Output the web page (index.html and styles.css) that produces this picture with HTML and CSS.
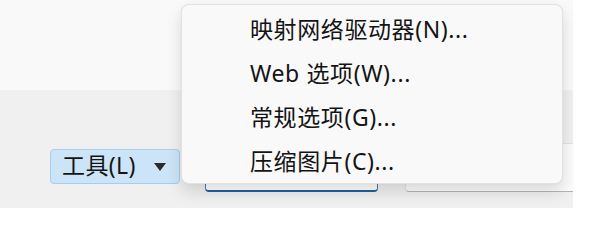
FILE: index.html
```html
<!DOCTYPE html>
<html lang="zh-CN">
<head>
<meta charset="utf-8">
<link rel="stylesheet" href="styles.css">
</head>
<body>
<div class="page">
  <div class="top-panel"></div>
  <div class="toolbar">
    <div class="tools-btn">
      <span class="tools-label">工具(L)</span>
      <span class="caret"></span>
    </div>
    <div class="field focused"></div>
    <div class="field plain"></div>
  </div>
  <div class="menu">
    <div class="menu-item">映射网络驱动器(N)...</div>
    <div class="menu-item">Web 选项(W)...</div>
    <div class="menu-item">常规选项(G)...</div>
    <div class="menu-item">压缩图片(C)...</div>
  </div>
</div>
</body>
</html>
```

FILE: styles.css
```css
html, body {
  margin: 0;
  padding: 0;
  background: #ffffff;
}
body {
  font-family: "Noto Sans", "Noto Sans CJK SC", sans-serif;
  color: #141414;
}
.page {
  position: relative;
  width: 573px;
}
.top-panel {
  height: 90px;
  background: #f9f9f9;
}
.toolbar {
  height: 118px;
  background: #f0f0f0;
  display: flex;
  align-items: flex-start;
  padding-left: 50px;
  gap: 25px;
  overflow: hidden;
  box-sizing: border-box;
}
.tools-btn {
  margin-top: 59px;
  width: 130px;
  height: 35px;
  box-sizing: border-box;
  background: #cce4f7;
  border: 1px solid #a6cdee;
  border-radius: 4px;
  display: flex;
  align-items: center;
  padding-left: 11px;
  flex-shrink: 0;
}
.tools-label {
  font-size: 23px;
  line-height: 1;
  margin-top: -2px;
  letter-spacing: 0.4px;
}
.caret {
  margin-left: 18px;
  width: 0;
  height: 0;
  border-left: 6px solid transparent;
  border-right: 6px solid transparent;
  border-top: 8px solid #2b2b2b;
}
.field {
  margin-top: 53px;
  height: 49px;
  box-sizing: border-box;
  border-radius: 4px;
  flex-shrink: 0;
}
.field.focused {
  width: 173px;
  background: #ffffff;
  border: 1px solid #4a78a8;
  border-bottom: 2px solid #24609e;
}
.field.plain {
  margin-left: 2px;
  width: 200px;
  background: #fbfbfb;
  border: 1px solid #e3e3e3;
  border-bottom-color: #b5b5b5;
}
.menu {
  position: absolute;
  left: 181px;
  top: 4px;
  width: 382px;
  height: 180px;
  box-sizing: border-box;
  background: #f9f9f9;
  border: 1px solid #e2e2e2;
  border-radius: 8px;
  box-shadow: 0 8px 16px rgba(0, 0, 0, 0.13), 0 0 2px rgba(0, 0, 0, 0.06);
  padding-top: 1px;
}
.menu-item {
  height: 44px;
  display: flex;
  align-items: center;
  padding-left: 68px;
  font-size: 23px;
  letter-spacing: 0.6px;
  white-space: nowrap;
}
```
